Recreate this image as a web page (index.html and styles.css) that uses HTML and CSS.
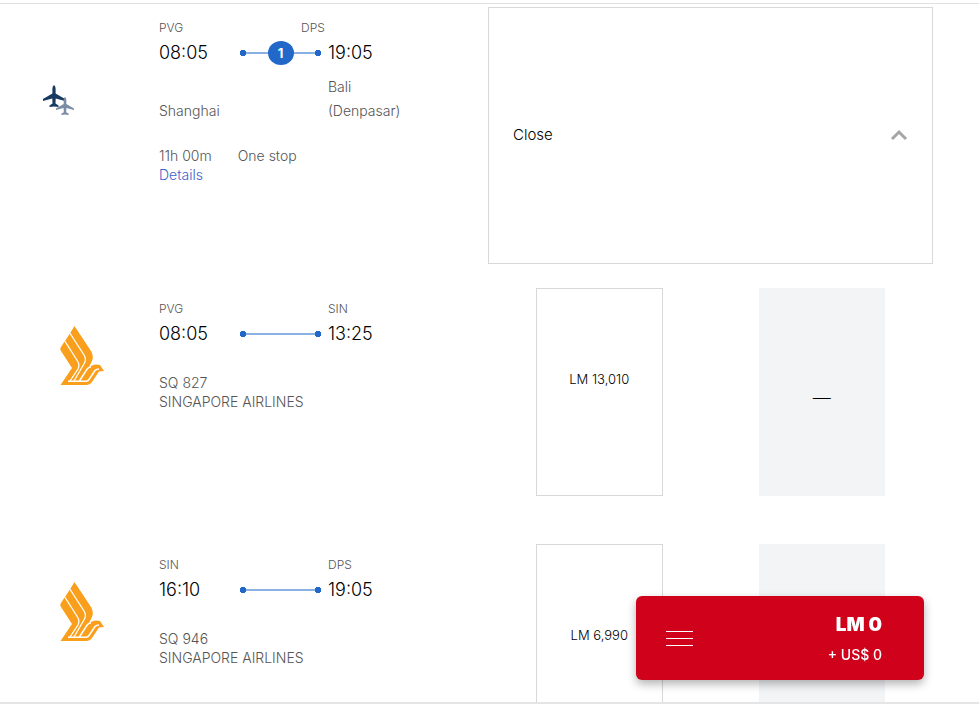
FILE: index.html
```html
<!DOCTYPE html>
<html lang="en">
  <head>
    <meta charset="UTF-8" />
    <meta name="viewport" content="width=device-width, initial-scale=1.0" />
    <title>Select flights</title>
    <link rel="stylesheet" href="styles.css">
  </head>
  <body>
    <svg class="symbols" aria-hidden="true">
      <symbol id="bird" viewBox="0 0 44 59">
        <path fill="#f99f1c" d="M14.500 0 L31 25 Q34 30 32 35 L28 43 L31 40 Q33 38.500 36 38.500 L40 39 L44 45 L39 45.500 L32 56 Q30 59 27 59 L0.500 59 L12 42 L1 25 Q-0.300 23 1 21 L4.500 15.500 L6 13.500 L9.500 8 Z" />
        <path fill="none" stroke="#fff" stroke-width="1.300" d="M9.500 6.500 L24 29 Q26.500 33 24.500 37 L14 55 M4.500 14.500 L17.500 35 Q20 39 18 43 L10 55" />
        <path fill="none" stroke="#fff" stroke-width="1.500" d="M8 55.200 L26 55.200 Q28 55 29 53.500 L35 44.500 Q36.500 43 39 43 M19 55.500 L27.500 42.500 Q29 41 31 41" />
      </symbol>
      <symbol id="plane" viewBox="0 0 22 22">
        <path d="M11 0 Q12.600 1 12.600 3.500 L12.600 8.500 L22 14 L22 16 L12.700 13.500 L12.500 18.500 L15.500 20.500 L15.500 22 L11 21.500 L6.500 22 L6.500 20.500 L9.500 18.500 L9.300 13.500 L0 16 L0 14 L9.400 8.500 L9.400 3.500 Q9.400 1 11 0 Z" />
      </symbol>
    </svg>

    <main class="flights">
      <section class="flight summary">
        <div class="carrier">
          <svg class="planes" viewBox="0 0 32 32">
            <use href="#plane" x="0" y="0" width="22" height="22" fill="#173a61" />
            <use href="#plane" x="13" y="12" width="18" height="18" fill="#7b8ca6" />
          </svg>
        </div>
        <div class="info">
          <div class="codes"><span>PVG</span><span>DPS</span></div>
          <div class="times">
            <span>08:05</span>
            <div class="route"><span class="stops">1</span></div>
            <span>19:05</span>
          </div>
          <div class="cities"><span>Shanghai</span><span>Bali<br>(Denpasar)</span></div>
          <div class="details">
            <div class="duration"><span>11h 00m</span><span>One stop</span></div>
            <a class="details-link" href="#">Details</a>
          </div>
        </div>
        <button class="close-button" type="button">
          <span>Close</span>
          <svg class="chevron" viewBox="0 0 18 12"><path d="M2 10 L9 3 L16 10" fill="none" stroke="#a5a5a5" stroke-width="3" /></svg>
        </button>
      </section>

      <section class="flight">
        <div class="carrier"><svg class="bird"><use href="#bird" /></svg></div>
        <div class="info">
          <div class="codes"><span>PVG</span><span>SIN</span></div>
          <div class="times">
            <span>08:05</span>
            <div class="route"></div>
            <span>13:25</span>
          </div>
          <div class="airline">SQ 827<br>SINGAPORE AIRLINES</div>
        </div>
        <div class="fares">
          <button class="fare" type="button">LM 13,010</button>
          <div class="fare fare-empty">—</div>
        </div>
      </section>

      <section class="flight">
        <div class="carrier"><svg class="bird"><use href="#bird" /></svg></div>
        <div class="info">
          <div class="codes"><span>SIN</span><span>DPS</span></div>
          <div class="times">
            <span>16:10</span>
            <div class="route"></div>
            <span>19:05</span>
          </div>
          <div class="airline">SQ 946<br>SINGAPORE AIRLINES</div>
        </div>
        <div class="fares">
          <button class="fare" type="button">LM 6,990</button>
          <div class="fare fare-empty"></div>
        </div>
      </section>
    </main>

    <button class="basket" type="button">
      <span class="menu-icon"><i></i><i></i><i></i></span>
      <span class="basket-total">
        <strong>LM 0</strong>
        <span>+ US$ 0</span>
      </span>
    </button>
  </body>
</html>
```
FILE: styles.css
```css
* {
  box-sizing: border-box;
}

body {
  margin: 0;
  padding-top: 3px;
  background: #fff;
  color: #000;
  font-family: Inter, sans-serif;
  font-size: 14px;
  font-weight: 300;
}

button {
  font: inherit;
  color: inherit;
  cursor: pointer;
}

.symbols {
  display: none;
}

.flights {
  height: calc(100vh - 6px);
  padding: 3px 46px 0 0;
  border-top: 1px solid #e1e1e1;
  border-bottom: 2px solid #e5e5e5;
  box-shadow: 0 1px #aaa;
  overflow: hidden;
}

.flight {
  display: grid;
  grid-template-columns: 159px 329px 1fr;
  min-height: 208px;
  margin-bottom: 48px;
}

.summary {
  min-height: 257px;
  margin-bottom: 24px;
}

.carrier {
  padding: 38px 0 0 60px;
}

.summary .carrier {
  padding: 78px 0 0 43px;
}

.bird {
  display: block;
  width: 44px;
  height: 59px;
}

.planes {
  display: block;
  width: 32px;
  height: 32px;
}

.info {
  padding-top: 13px;
  color: #555;
}

.codes {
  display: grid;
  grid-template-columns: 169px 1fr;
  margin-bottom: 5px;
  font-size: 12px;
  line-height: 16px;
}

.summary .codes {
  grid-template-columns: 142px 1fr;
}

.times {
  display: grid;
  grid-template-columns: 81px 81px 1fr;
  align-items: center;
  color: #000;
  font-size: 18px;
  line-height: 24px;
}

.times > :last-child {
  padding-left: 7px;
}

.route {
  display: flex;
  align-items: center;
  justify-content: center;
  height: 24px;
  background:
    radial-gradient(circle, #2168c9 0 3px, transparent 3px) left center / 6px 6px no-repeat,
    radial-gradient(circle, #2168c9 0 3px, transparent 3px) right center / 6px 6px no-repeat,
    linear-gradient(#8bb0e4, #8bb0e4) center / 100% 2px no-repeat;
}

.stops {
  width: 26px;
  height: 24px;
  border-radius: 50%;
  background: #2168c9;
  color: #fff;
  font-size: 13px;
  font-weight: 700;
  text-align: center;
}

.cities {
  display: grid;
  grid-template-columns: 169px 1fr;
  align-items: end;
  margin-top: 10px;
  line-height: 24px;
}

.details {
  margin-top: 23px;
  line-height: 19px;
}

.duration {
  display: flex;
  gap: 26px;
}

.details-link {
  color: #3c5fc8;
  text-decoration: none;
}

.airline {
  margin-top: 27px;
  line-height: 19px;
}

.close-button {
  display: flex;
  align-items: center;
  justify-content: space-between;
  padding: 0 24px 2px;
  border: 1px solid #d8d8d8;
  background: #fff;
  font-size: 15px;
}

.chevron {
  width: 18px;
  height: 12px;
}

.fares {
  display: grid;
  grid-template-columns: 1fr 1fr;
  gap: 96px;
  padding: 0 48px;
}

.fare {
  display: flex;
  align-items: center;
  justify-content: center;
  padding: 0 0 26px;
  border: 1px solid #d8d8d8;
  background: #fff;
  font-size: 13px;
}

.fare-empty {
  padding: 10px 0 0;
  border: none;
  background: #f3f4f6;
  font-size: 18px;
}

.basket {
  position: fixed;
  right: 55px;
  bottom: 27px;
  display: flex;
  align-items: center;
  justify-content: space-between;
  width: 288px;
  height: 84px;
  padding: 0 42px 0 30px;
  border: none;
  border-radius: 6px;
  background: #d0021b;
  box-shadow: 0 4px 10px rgba(0, 0, 0, 0.3);
  color: #fff;
}

.menu-icon {
  display: flex;
  flex-direction: column;
  gap: 6px;
  width: 27px;
}

.menu-icon i {
  height: 1px;
  background: #fff;
}

.basket-total {
  display: flex;
  flex-direction: column;
  gap: 6px;
  padding-top: 3px;
  font-weight: 500;
  line-height: 24px;
  text-align: right;
}

.basket-total strong {
  font-size: 19px;
  font-weight: 900;
}
```
